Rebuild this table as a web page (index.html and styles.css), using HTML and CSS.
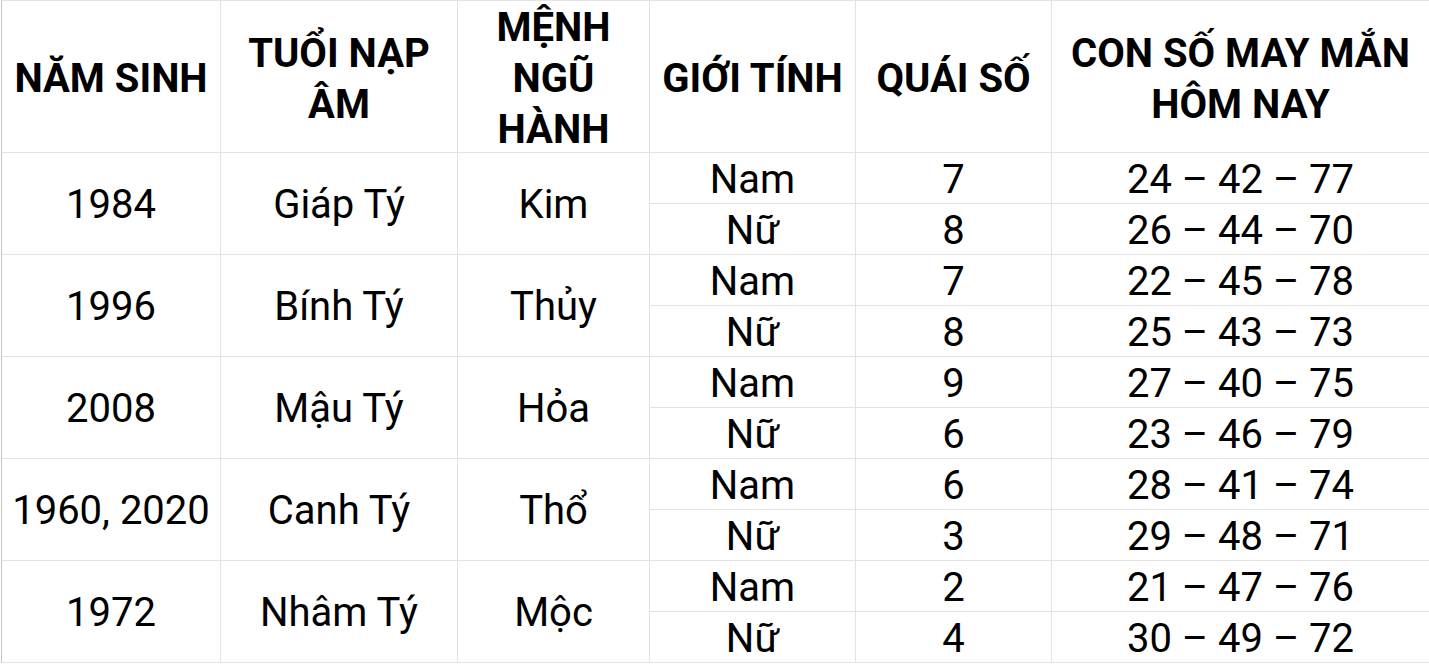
FILE: index.html
```html
<!DOCTYPE html>
<html lang="vi">
<head>
<meta charset="utf-8">
<title>Con số may mắn</title>
<link rel="stylesheet" href="styles.css">
</head>
<body>
<div class="sheet">
  <div class="cell head">NĂM SINH</div>
  <div class="cell head">TUỔI NẠP<br>ÂM</div>
  <div class="cell head">MỆNH<br>NGŨ<br>HÀNH</div>
  <div class="cell head">GIỚI TÍNH</div>
  <div class="cell head">QUÁI SỐ</div>
  <div class="cell head">CON SỐ MAY MẮN<br>HÔM NAY</div>

  <div class="cell span">1984</div>
  <div class="cell span">Giáp Tý</div>
  <div class="cell span">Kim</div>
  <div class="cell">Nam</div><div class="cell">7</div><div class="cell">24 – 42 – 77</div>
  <div class="cell">Nữ</div><div class="cell">8</div><div class="cell">26 – 44 – 70</div>

  <div class="cell span">1996</div>
  <div class="cell span">Bính Tý</div>
  <div class="cell span">Thủy</div>
  <div class="cell">Nam</div><div class="cell">7</div><div class="cell">22 – 45 – 78</div>
  <div class="cell">Nữ</div><div class="cell">8</div><div class="cell">25 – 43 – 73</div>

  <div class="cell span">2008</div>
  <div class="cell span">Mậu Tý</div>
  <div class="cell span">Hỏa</div>
  <div class="cell">Nam</div><div class="cell">9</div><div class="cell">27 – 40 – 75</div>
  <div class="cell">Nữ</div><div class="cell">6</div><div class="cell">23 – 46 – 79</div>

  <div class="cell span">1960, 2020</div>
  <div class="cell span">Canh Tý</div>
  <div class="cell span">Thổ</div>
  <div class="cell">Nam</div><div class="cell">6</div><div class="cell">28 – 41 – 74</div>
  <div class="cell">Nữ</div><div class="cell">3</div><div class="cell">29 – 48 – 71</div>

  <div class="cell span">1972</div>
  <div class="cell span">Nhâm Tý</div>
  <div class="cell span">Mộc</div>
  <div class="cell">Nam</div><div class="cell">2</div><div class="cell">21 – 47 – 76</div>
  <div class="cell">Nữ</div><div class="cell">4</div><div class="cell">30 – 49 – 72</div>
</div>
</body>
</html>
```

FILE: styles.css
```css
html, body {
  margin: 0;
  padding: 0;
  background: #ffffff;
}

body {
  padding-left: 1px;
  font-family: Roboto, "Noto Sans", sans-serif;
  color: #000000;
  overflow: hidden;
}

.sheet {
  display: grid;
  grid-template-columns: 218px 236px 191px 205px 195px 1fr;
  grid-template-rows: 151px repeat(10, 50px);
  gap: 1px;
  background: #e2e2e2;
  border-top: 1px solid #e2e2e2;
  border-bottom: 1px solid #e2e2e2;
  border-left: 1px solid #c4c4c4;
}

.cell {
  background: #ffffff;
  display: flex;
  align-items: center;
  justify-content: center;
  text-align: center;
  font-size: 40px;
  font-weight: 400;
  white-space: nowrap;
  padding-top: 2px;
  box-sizing: border-box;
}

.head {
  font-size: 40px;
  font-weight: 700;
  line-height: 51px;
  padding-top: 4px;
}

.span {
  grid-row: span 2;
}
```
